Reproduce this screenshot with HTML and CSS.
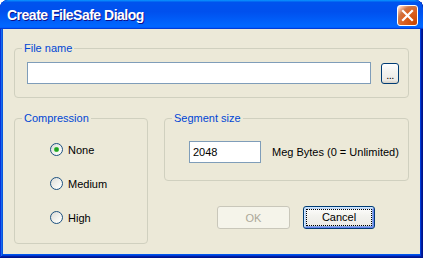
FILE: index.html
```html
<!DOCTYPE html>
<html lang="en">
<head>
  <meta charset="UTF-8" />
  <title>Create FileSafe Dialog</title>
  <link rel="stylesheet" href="styles.css">
</head>
<body>
  <div class="window">
    <div class="titlebar">
      <span class="title">Create FileSafe Dialog</span>
      <button class="close-btn" aria-label="Close">
        <svg width="21" height="21" viewBox="0 0 21 21">
          <path d="M6 6 L15 15 M15 6 L6 15" stroke="#fff" stroke-width="2.2" stroke-linecap="square" fill="none"/>
        </svg>
      </button>
    </div>

    <div class="client">
      <!-- File name -->
      <div class="group file-group">
        <span class="legend">File name</span>
        <input type="text" class="textbox file-input" />
        <button class="btn browse-btn">...</button>
      </div>

      <div class="lower">
        <!-- Compression -->
        <div class="group compression-group">
          <span class="legend">Compression</span>
          <label class="radio-row"><span class="radio checked"></span>None</label>
          <label class="radio-row"><span class="radio"></span>Medium</label>
          <label class="radio-row"><span class="radio"></span>High</label>
        </div>

        <div class="right-col">
          <!-- Segment size -->
          <div class="group segment-group">
            <span class="legend">Segment size</span>
            <input type="text" class="textbox segment-input" value="2048" />
            <span class="unit">Meg Bytes (0 = Unlimited)</span>
          </div>

          <div class="actions">
            <button class="btn ok-btn" disabled>OK</button>
            <button class="btn cancel-btn"><span class="focus">Cancel</span></button>
          </div>
        </div>
      </div>
    </div>
  </div>
</body>
</html>
```

FILE: styles.css
```css
/* Global */
* {
  margin: 0;
  padding: 0;
  box-sizing: border-box;
}

body {
  background: #fff;
  font-family: 'Liberation Sans', Arial, sans-serif;
  font-size: 11px;
  color: #000;
}

/* Window frame */
.window {
  width: 423px;
  height: 258px;
  display: flex;
  flex-direction: column;
  background: #0055ea;
  border-radius: 8px 8px 0 0;
  box-shadow: inset -1px -1px #00138c, inset 1px 1px #0831d9,
              inset -2px -2px #001ea0, inset 2px 2px #166aee,
              inset -3px -3px #003bda, inset 3px 3px #0855dd;
  overflow: hidden;
}

.titlebar {
  height: 29px;
  display: flex;
  align-items: center;
  justify-content: space-between;
  padding: 0 5px 0 7px;
  background: linear-gradient(180deg, #0997ff, #0053ee 8%, #0050ee 40%, #0066ff 88%, #0066ff 93%, #005bff 95%, #003dd7 96%, #003dd7);
  border-radius: 8px 8px 0 0;
}

.title {
  color: #fff;
  font-weight: bold;
  font-size: 14px;
  letter-spacing: -0.5px;
  text-shadow: 1px 1px #0f1089;
  padding-top: 1px;
}

.close-btn {
  width: 21px;
  height: 21px;
  border: 1px solid #fff;
  border-radius: 3px;
  background: radial-gradient(circle at 90% 90%, #cc4600 0%, #dc6527 55%, #cd7546 70%, #ffccb2 90%, #fff 100%);
  display: flex;
  align-items: center;
  justify-content: center;
  margin-top: 2px;
}

.close-btn svg {
  display: block;
  margin: -1px;
}

/* Client area */
.client {
  flex: 1;
  margin: 0 3px 4px;
  background: #ece9d8;
  padding: 19px 11px 0;
}

.group {
  position: relative;
  border: 1px solid #d0d0bf;
  border-radius: 4px;
}

.legend {
  position: absolute;
  top: -8px;
  left: 7px;
  padding: 0 2px;
  line-height: 14px;
  background: #ece9d8;
  color: #0046d5;
}

.textbox {
  height: 22px;
  border: 1px solid #7f9db9;
  background: #fff;
  font-family: inherit;
  font-size: 11px;
  padding: 0 3px;
  outline: none;
}

/* File name */
.file-group {
  height: 50px;
  display: flex;
  align-items: flex-start;
  gap: 10px;
  padding: 13px 9px 0 12px;
}

.file-input {
  flex: 1;
}

.btn {
  font-family: inherit;
  font-size: 11px;
  border: 1px solid #003c74;
  border-radius: 3px;
  background: linear-gradient(180deg, #fff, #f3f3ef 40%, #ecebe6 85%, #d6d0c5);
  color: #000;
}

.browse-btn {
  width: 18px;
  height: 21px;
  margin-top: 1px;
  line-height: 1;
  letter-spacing: -0.5px;
  padding-top: 3px;
}

/* Lower section */
.lower {
  display: flex;
  gap: 16px;
  margin-top: 20px;
}

.compression-group {
  width: 134px;
  height: 126px;
  padding: 24px 0 0 35px;
  display: flex;
  flex-direction: column;
  gap: 21px;
}

.radio-row {
  display: flex;
  align-items: center;
  gap: 5px;
  height: 13px;
}

.radio {
  width: 13px;
  height: 13px;
  border: 1px solid #1c5180;
  border-radius: 50%;
  background: linear-gradient(135deg, #dcdcd7, #f8f8f4 70%, #fff);
}

.radio.checked {
  background: radial-gradient(circle, #21a121 0, #21a121 1.6px, #6bd06b 2.4px, transparent 3px),
              linear-gradient(135deg, #dcdcd7, #f8f8f4 70%, #fff);
}

.right-col {
  flex: 1;
  display: flex;
  flex-direction: column;
}

.segment-group {
  height: 63px;
  display: flex;
  align-items: flex-start;
  gap: 11px;
  padding: 22px 0 0 24px;
}

.segment-input {
  width: 72px;
}

.unit {
  line-height: 22px;
}

/* Buttons */
.actions {
  display: flex;
  justify-content: flex-end;
  gap: 13px;
  margin-top: 25px;
  padding-right: 34px;
}

.ok-btn {
  width: 73px;
  height: 23px;
  border-color: #c9c7ba;
  background: #f5f4ea;
  color: #aca899;
}

.cancel-btn {
  width: 72px;
  height: 23px;
  padding: 2px;
  box-shadow: inset 1px 1px #cee7ff, inset -1px -1px #6982ee, inset 2px 2px #bcd4f6, inset -2px -2px #89ade4;
}

.focus {
  display: block;
  height: 100%;
  border: 1px dotted #000;
  line-height: 15px;
}
```
